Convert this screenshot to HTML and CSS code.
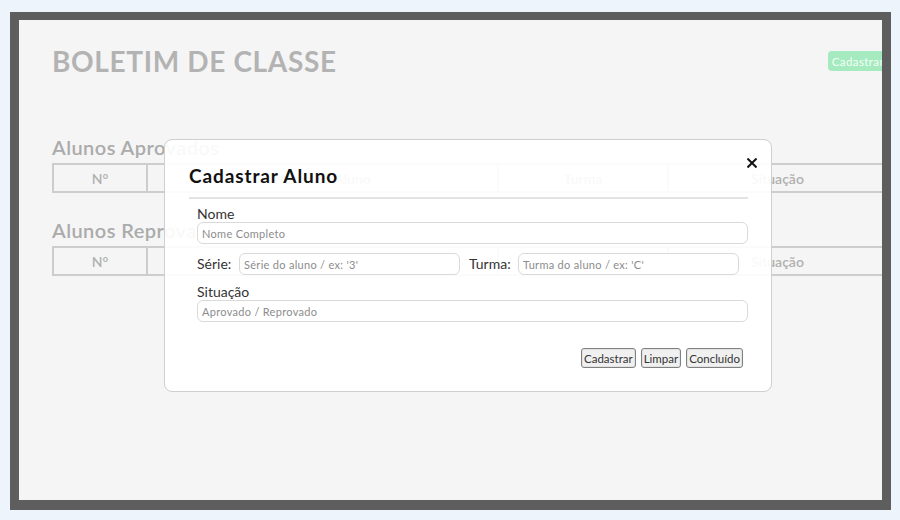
FILE: index.html
```html
<!DOCTYPE html>
<html lang="pt-BR">
<head>
<meta charset="utf-8">
<title>Boletim de Classe</title>
<link rel="stylesheet" href="styles.css">
</head>
<body>
<div class="frame">
  <div class="screen">
    <main class="page">
      <header class="top">
        <h1 class="title">BOLETIM DE CLASSE</h1>
        <button class="btn-add" type="button">Cadastrar</button>
      </header>

      <section class="group">
        <h2 class="group-title">Alunos Aprovados</h2>
        <table class="grid">
          <thead>
            <tr>
              <th class="c-num">N°</th>
              <th class="c-name">Nome do Aluno</th>
              <th class="c-class">Turma</th>
              <th class="c-status">Situação</th>
            </tr>
          </thead>
          <tbody></tbody>
        </table>
      </section>

      <section class="group second">
        <h2 class="group-title">Alunos Reprovados</h2>
        <table class="grid">
          <thead>
            <tr>
              <th class="c-num">N°</th>
              <th class="c-name">Nome do Aluno</th>
              <th class="c-class">Turma</th>
              <th class="c-status">Situação</th>
            </tr>
          </thead>
          <tbody></tbody>
        </table>
      </section>
    </main>

    <div class="modal">
      <button class="close" type="button" aria-label="Fechar">
        <svg width="10" height="10" viewBox="0 0 10 10"><path d="M1.2 1.2 L8.8 8.8 M8.8 1.2 L1.2 8.8" stroke="#111" stroke-width="2" stroke-linecap="square" fill="none"/></svg>
      </button>
      <h3 class="modal-title">Cadastrar Aluno</h3>
      <div class="rule"></div>
      <form class="form">
        <label class="label" for="nome">Nome</label>
        <input id="nome" class="field" type="text" placeholder="Nome Completo">
        <div class="row">
          <label class="inline-label serie-label" for="serie">Série:</label>
          <input id="serie" class="field short" type="text" placeholder="Série do aluno / ex: '3'">
          <label class="inline-label turma-label" for="turma">Turma:</label>
          <input id="turma" class="field short" type="text" placeholder="Turma do aluno / ex: 'C'">
        </div>
        <label class="label label-gap" for="situacao">Situação</label>
        <input id="situacao" class="field" type="text" placeholder="Aprovado / Reprovado">
        <div class="actions">
          <button class="act" type="button">Cadastrar</button>
          <button class="act" type="button">Limpar</button>
          <button class="act" type="button">Concluído</button>
        </div>
      </form>
    </div>
  </div>
</div>
</body>
</html>
```

FILE: styles.css
```css
body {
  margin: 0;
  background: #edf4fc;
  font-family: "Lato", "Open Sans", sans-serif;
}

.frame {
  margin: 12px 9px 10px 10px;
  border-style: solid;
  border-color: #5e5e5e;
  border-width: 8px 9px 10px 9px;
}

.screen {
  position: relative;
  height: 480px;
  overflow: hidden;
  background: #f5f5f5;
}

.page {
  width: 836px;
  padding: 24px 0 0 33px;
}

.top {
  display: flex;
  justify-content: space-between;
  align-items: center;
  height: 34px;
}

.title {
  margin: 0;
  font-size: 28px;
  line-height: 34px;
  font-weight: 700;
  letter-spacing: 0.65px;
  color: #b3b3b3;
}

.btn-add {
  height: 20px;
  padding: 0 4px;
  border: 0;
  border-radius: 4px;
  background: #a6eabf;
  color: #f2fff6;
  font-family: "Lato", sans-serif;
  font-size: 11.5px;
  letter-spacing: 0.4px;
}

.group-title {
  margin: 57px 0 4px;
  font-size: 20px;
  line-height: 24px;
  font-weight: 600;
  letter-spacing: 0.45px;
  color: #ababab;
}

.second .group-title {
  margin-top: 25px;
}

.grid {
  width: 836px;
  table-layout: fixed;
  border-spacing: 0;
  border: 2px solid #cdcdcd;
}

.grid th {
  box-sizing: border-box;
  height: 26px;
  padding: 0;
  border-left: 2px solid #cdcdcd;
  font-size: 14px;
  font-weight: 600;
  color: #b0b0b0;
  text-align: center;
}

.grid th.c-num { width: 92px; border-left: 0; }
.grid th.c-name { width: 351px; }
.grid th.c-class { width: 170px; }
.grid th.c-status { width: 219px; }

.modal {
  position: absolute;
  left: 145px;
  top: 119px;
  width: 608px;
  box-sizing: border-box;
  padding: 24px 23px 23px 24px;
  border: 1px solid #cfcfcf;
  border-radius: 8px;
  background: rgba(255, 255, 255, 0.92);
}

.close {
  position: absolute;
  top: 18px;
  right: 14px;
  width: 10px;
  height: 10px;
  padding: 0;
  border: 0;
  background: none;
  line-height: 0;
}

.modal-title {
  margin: 0;
  font-size: 19px;
  line-height: 24px;
  font-weight: 700;
  letter-spacing: 0.9px;
  color: #111;
}

.rule {
  margin-top: 9px;
  height: 2px;
  background: #e3e3e3;
}

.form {
  padding-left: 8px;
}

.label {
  display: block;
  margin-top: 7px;
  font-size: 14px;
  line-height: 16px;
  color: #333;
}

.label-gap {
  margin-top: 9px;
}

.field {
  display: block;
  box-sizing: border-box;
  width: 100%;
  height: 22px;
  margin: 0;
  padding: 0 4px;
  border: 1px solid #dadada;
  border-radius: 6px;
  background: #fff;
  font-family: "Lato", sans-serif;
  font-size: 11px;
  letter-spacing: 0.3px;
  color: #333;
}

.field::placeholder {
  color: #8c8c8c;
}

.row {
  display: flex;
  align-items: center;
  margin-top: 9px;
}

.inline-label {
  flex: none;
  font-size: 14px;
  line-height: 16px;
  color: #333;
}

.serie-label { width: 42px; }
.turma-label { width: 40px; margin: 0 9px; }

.row .field {
  flex: none;
  width: 221px;
}

.actions {
  display: flex;
  justify-content: flex-end;
  gap: 5px;
  margin-top: 26px;
  padding-right: 5px;
}

.act {
  height: 20px;
  padding: 0 2px;
  border: 1px solid #808080;
  border-radius: 3px;
  background: #f0f0f0;
  box-shadow: inset 0 0 0 1px #e2e2e2;
  font-family: "Lato", sans-serif;
  font-size: 11.5px;
  color: #333;
}
```
